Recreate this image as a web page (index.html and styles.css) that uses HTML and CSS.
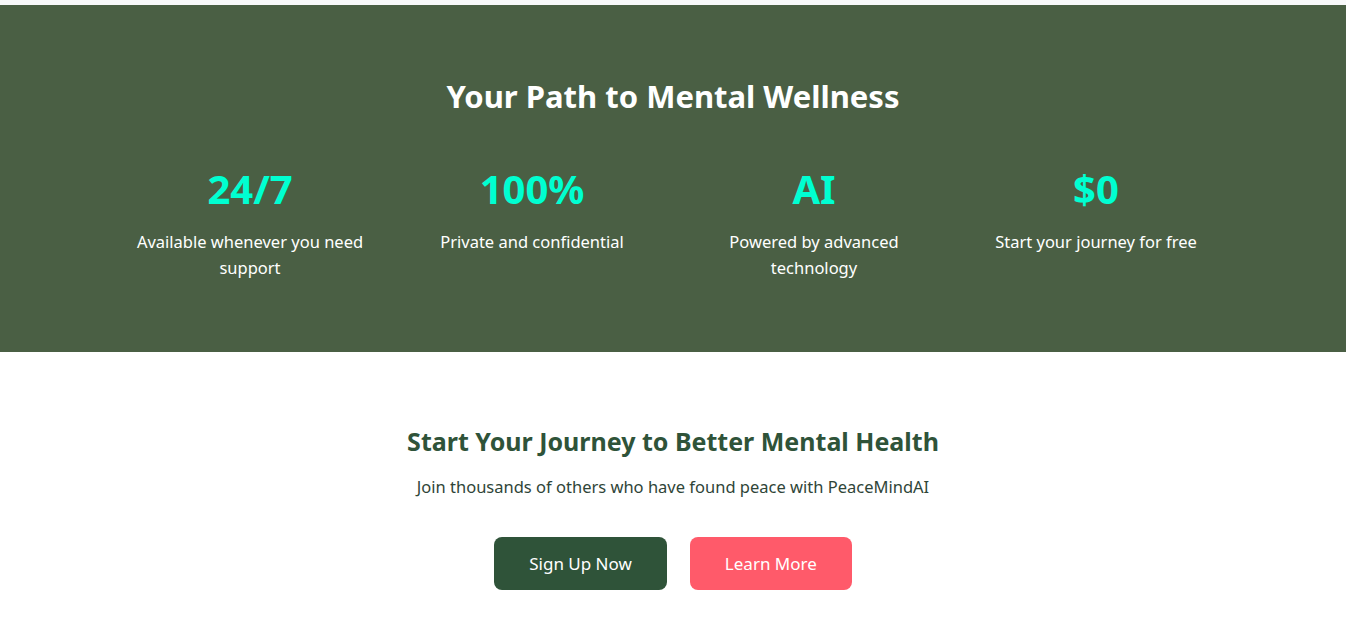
FILE: index.html
```html
<!DOCTYPE html>
<html lang="en">
<head>
<meta charset="utf-8">
<title>PeaceMindAI</title>
<link rel="stylesheet" href="styles.css">
</head>
<body>
<div class="top-band"></div>
<section class="stats">
  <h2 class="stats-title">Your Path to Mental Wellness</h2>
  <div class="stats-grid">
    <div class="stat">
      <div class="stat-num">24/7</div>
      <p class="stat-text">Available whenever you need support</p>
    </div>
    <div class="stat">
      <div class="stat-num">100%</div>
      <p class="stat-text">Private and confidential</p>
    </div>
    <div class="stat">
      <div class="stat-num">AI</div>
      <p class="stat-text">Powered by advanced technology</p>
    </div>
    <div class="stat">
      <div class="stat-num">$0</div>
      <p class="stat-text">Start your journey for free</p>
    </div>
  </div>
</section>
<section class="cta">
  <h2 class="cta-title">Start Your Journey to Better Mental Health</h2>
  <p class="cta-text">Join thousands of others who have found peace with PeaceMindAI</p>
  <div class="cta-buttons">
    <a class="btn btn-primary" href="#">Sign Up Now</a>
    <a class="btn btn-secondary" href="#">Learn More</a>
  </div>
</section>
</body>
</html>
```
FILE: styles.css
```css
* { box-sizing: border-box; }
body {
  margin: 0;
  font-family: "Noto Sans", "Open Sans", sans-serif;
  background: #ffffff;
}
.top-band {
  height: 5px;
  background: #f8f9fa;
}
.stats {
  background: #4a5f44;
  color: #ffffff;
  padding: 72px 20px 71px;
  text-align: center;
}
.stats-title {
  margin: 0 0 50px;
  font-size: 31px;
  line-height: 38px;
  font-weight: 700;
}
.stats-grid {
  display: grid;
  grid-template-columns: repeat(4, 250px);
  gap: 32px;
  justify-content: center;
}
.stat-num {
  font-size: 40px;
  font-weight: 700;
  line-height: 48px;
  color: #00ffd1;
}
.stat-text {
  margin: 16px 0 0;
  font-size: 16.5px;
  line-height: 26px;
}
.cta {
  padding: 73px 20px 40px;
  text-align: center;
}
.cta-title {
  margin: 0;
  font-size: 25px;
  line-height: 32px;
  font-weight: 700;
  color: #2f5339;
}
.cta-text {
  margin: 18px 0 0;
  font-size: 16.5px;
  line-height: 24px;
  color: #2f4538;
}
.cta-buttons {
  display: flex;
  justify-content: center;
  gap: 23px;
  margin-top: 38px;
}
.btn {
  display: inline-block;
  height: 53px;
  line-height: 53px;
  padding: 0 35px;
  border-radius: 8px;
  font-size: 17px;
  color: #ffffff;
  text-decoration: none;
}
.btn-primary { background: #2f5339; }
.btn-secondary { background: #ff5a6a; }
```
